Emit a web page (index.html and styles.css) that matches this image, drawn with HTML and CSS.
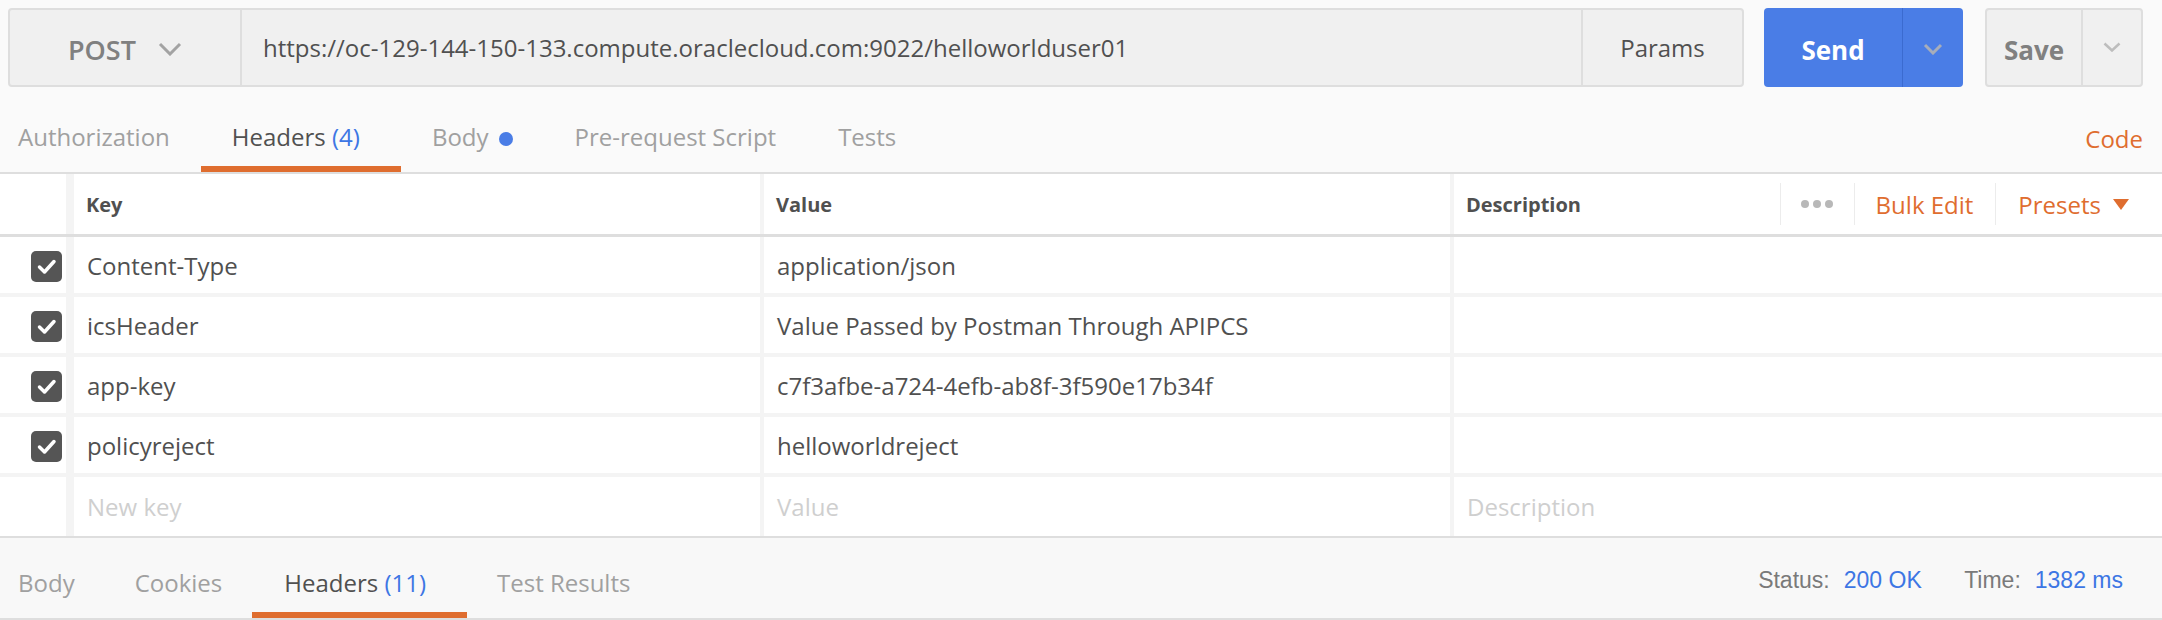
FILE: index.html
```html
<!DOCTYPE html>
<html>
<head>
<meta charset="utf-8">
<link rel="stylesheet" href="styles.css">
</head>
<body>
<div class="topbar">
  <div class="urlgroup">
    <div class="method">POST<svg class="chev" width="24" height="14" viewBox="0 0 24 14"><polyline points="2,2 12,12 22,2" fill="none" stroke="#a3a3a3" stroke-width="3"/></svg></div>
    <div class="url">https://oc-129-144-150-133.compute.oraclecloud.com:9022/helloworlduser01</div>
    <div class="params">Params</div>
  </div>
  <div class="send">
    <div class="send-main">Send</div>
    <div class="send-drop"><svg width="20" height="12" viewBox="0 0 20 12"><polyline points="2,2 10,10 18,2" fill="none" stroke="#a7adba" stroke-width="3"/></svg></div>
  </div>
  <div class="save">
    <div class="save-main">Save</div>
    <div class="save-drop"><svg width="18" height="10" viewBox="0 0 18 10"><polyline points="1.5,1.5 9,8.5 16.5,1.5" fill="none" stroke="#bdbdbd" stroke-width="2.5"/></svg></div>
  </div>
</div>

<div class="reqtabs">
  <div class="tab first">Authorization</div>
  <div class="tab active">Headers <span class="count">(4)</span></div>
  <div class="tab">Body<span class="dot"></span></div>
  <div class="tab">Pre-request Script</div>
  <div class="tab">Tests</div>
  <div class="code">Code</div>
</div>

<div class="table">
  <div class="row head">
    <div class="chk"></div>
    <div class="cell">Key</div>
    <div class="cell">Value</div>
    <div class="cell desc">Description
      <div class="actions">
        <div class="act dots"><span></span><span></span><span></span></div>
        <div class="act bulk">Bulk Edit</div>
        <div class="act presets">Presets<svg class="tri" width="16" height="11" viewBox="0 0 16 11"><polygon points="0,0 16,0 8,11" fill="#df6d2f"/></svg></div>
      </div>
    </div>
  </div>
  <div class="row">
    <div class="chk"><span class="box"><svg width="31" height="31" viewBox="0 0 31 31"><polyline points="8.5,16 13.5,21 23,10.5" fill="none" stroke="#fff" stroke-width="3.5" stroke-linecap="round" stroke-linejoin="round"/></svg></span></div>
    <div class="cell">Content-Type</div>
    <div class="cell">application/json</div>
    <div class="cell"></div>
  </div>
  <div class="row">
    <div class="chk"><span class="box"><svg width="31" height="31" viewBox="0 0 31 31"><polyline points="8.5,16 13.5,21 23,10.5" fill="none" stroke="#fff" stroke-width="3.5" stroke-linecap="round" stroke-linejoin="round"/></svg></span></div>
    <div class="cell">icsHeader</div>
    <div class="cell">Value Passed by Postman Through APIPCS</div>
    <div class="cell"></div>
  </div>
  <div class="row">
    <div class="chk"><span class="box"><svg width="31" height="31" viewBox="0 0 31 31"><polyline points="8.5,16 13.5,21 23,10.5" fill="none" stroke="#fff" stroke-width="3.5" stroke-linecap="round" stroke-linejoin="round"/></svg></span></div>
    <div class="cell">app-key</div>
    <div class="cell">c7f3afbe-a724-4efb-ab8f-3f590e17b34f</div>
    <div class="cell"></div>
  </div>
  <div class="row">
    <div class="chk"><span class="box"><svg width="31" height="31" viewBox="0 0 31 31"><polyline points="8.5,16 13.5,21 23,10.5" fill="none" stroke="#fff" stroke-width="3.5" stroke-linecap="round" stroke-linejoin="round"/></svg></span></div>
    <div class="cell">policyreject</div>
    <div class="cell">helloworldreject</div>
    <div class="cell"></div>
  </div>
  <div class="row last">
    <div class="chk"></div>
    <div class="cell ph">New key</div>
    <div class="cell ph">Value</div>
    <div class="cell ph">Description</div>
  </div>
</div>

<div class="restabs">
  <div class="tab first">Body</div>
  <div class="tab">Cookies</div>
  <div class="tab active">Headers <span class="count">(11)</span></div>
  <div class="tab">Test Results</div>
  <div class="status">
    <span class="lbl">Status:</span><span class="val">200 OK</span>
    <span class="lbl gap">Time:</span><span class="val">1382 ms</span>
  </div>
</div>
</body>
</html>
```

FILE: styles.css
```css
* { box-sizing: border-box; }

body {
  margin: 0;
  width: 2162px;
  height: 620px;
  overflow: hidden;
  background: #fafafa;
  font-family: "Open Sans", sans-serif;
  color: #505050;
}

/* ---------- top bar ---------- */
.topbar {
  display: flex;
  height: 87px;
  padding: 8px 19px 0 8px;
}

.urlgroup {
  display: flex;
  width: 1736px;
  height: 79px;
  background: #f0f0f0;
  border: 2px solid #dedede;
  border-radius: 4px;
}

.method {
  width: 232px;
  flex: none;
  display: flex;
  align-items: center;
  justify-content: center;
  padding-top: 4px;
  border-right: 2px solid #dedede;
  font-size: 27px;
  font-weight: 600;
  color: #808080;
}

.method .chev { margin-left: 22px; margin-top: -2px; }

.url {
  flex: 1;
  display: flex;
  align-items: center;
  padding-left: 21px;
  font-size: 24px;
  color: #505050;
}

.params {
  width: 161px;
  flex: none;
  display: flex;
  align-items: center;
  justify-content: center;
  border-left: 2px solid #dedede;
  font-size: 24px;
  color: #505050;
}

.send {
  display: flex;
  margin-left: 20px;
  width: 199px;
  height: 79px;
  background: #4a7de6;
  border-radius: 4px;
}

.send-main {
  width: 139px;
  display: flex;
  align-items: center;
  justify-content: center;
  padding-top: 4px;
  border-right: 1px solid #3b6bd0;
  font-size: 26px;
  font-weight: 700;
  color: #fff;
}

.send-drop {
  flex: 1;
  display: flex;
  align-items: center;
  justify-content: center;
  padding-top: 2px;
}

.save {
  display: flex;
  margin-left: 22px;
  width: 158px;
  height: 79px;
  background: #f0f0f0;
  border: 2px solid #dedede;
  border-radius: 4px;
}

.save-main {
  width: 96px;
  display: flex;
  align-items: center;
  justify-content: center;
  padding-top: 4px;
  border-right: 2px solid #dedede;
  font-size: 26px;
  font-weight: 700;
  color: #808080;
}

.save-drop {
  flex: 1;
  display: flex;
  align-items: center;
  justify-content: center;
  padding-bottom: 2px;
}

/* ---------- tabs ---------- */
.reqtabs {
  display: flex;
  height: 87px;
  border-bottom: 2px solid #dedede;
  padding-right: 19px;
}

.tab {
  height: 85px;
  padding: 34px 31px 13px;
  border-bottom: 6px solid transparent;
  font-size: 24px;
  line-height: 32px;
  color: #a0a0a0;
  white-space: nowrap;
}

.tab.first { padding-left: 18px; }

.tab.active {
  color: #505050;
  border-bottom-color: #df6d2f;
}

.reqtabs .tab.active { padding-right: 41px; }

.count { color: #3d76e4; }

.dot {
  display: inline-block;
  width: 14px;
  height: 14px;
  margin-left: 10px;
  border-radius: 50%;
  background: #4a7de6;
}

.code {
  margin-left: auto;
  padding-top: 36px;
  font-size: 24px;
  line-height: 32px;
  color: #df6d2f;
}

/* ---------- table ---------- */
.table {
  background: #f4f4f4;
}

.row {
  display: grid;
  grid-template-columns: 70px 686px 686px 1fr;
  column-gap: 4px;
  height: 60px;
  font-size: 24px;
  color: #505050;
}

.row > div {
  background: #fff;
  display: flex;
  align-items: center;
}

.row .cell {
  padding-left: 13px;
  white-space: nowrap;
}

.row .chk {
  border-right: 4px solid #f4f4f4;
  justify-content: flex-end;
  padding-right: 4px;
}

.row.head {
  height: 63px;
  border-bottom: 3px solid #dedede;
  font-size: 20px;
  font-weight: 700;
}

.row.head .cell { padding-left: 12px; }

.row.head .desc { padding-right: 0; }

.row:not(.head) {
  height: 60px;
  border-bottom: 4px solid #f4f4f4;
}

.row.last {
  height: 59px;
  border-bottom: none;
}

.cell.ph { color: #cfcfcf; }

.box {
  width: 31px;
  height: 31px;
  border-radius: 5px;
  background: #555;
  display: flex;
  margin-top: 3px;
}

.actions {
  margin-left: auto;
  display: flex;
  height: 42px;
  font-weight: 400;
  font-size: 24px;
}

.act {
  display: flex;
  align-items: center;
  border-left: 1px solid #ececec;
}

.dots {
  width: 74px;
  justify-content: center;
  gap: 4px;
}

.dots span {
  width: 8px;
  height: 8px;
  border-radius: 50%;
  background: #b8b8b8;
}

.bulk {
  padding: 0 22px 0 21px;
  color: #df6d2f;
}

.presets {
  padding: 0 33px 0 22px;
  color: #df6d2f;
}

.presets .tri { margin-left: 12px; }

/* ---------- response tabs ---------- */
.restabs {
  display: flex;
  height: 84px;
  background: #f8f8f8;
  border-top: 2px solid #dedede;
  border-bottom: 2px solid #dedede;
}

.restabs .tab {
  height: 80px;
  padding-top: 29px;
  padding-right: 30px;
}

.restabs .tab:not(.first) { padding-left: 30px; }
.restabs .tab.active { padding-left: 32px; padding-right: 41px; }

.status {
  margin-left: auto;
  padding: 26px 39px 0 0;
  font-family: "Liberation Sans", Arial, sans-serif;
  font-size: 23px;
  line-height: 32px;
  white-space: nowrap;
}

.status .lbl { color: #7a7a7a; }
.status .val { color: #3d76e4; margin-left: 14px; }
.status .gap { margin-left: 36px; }
```
